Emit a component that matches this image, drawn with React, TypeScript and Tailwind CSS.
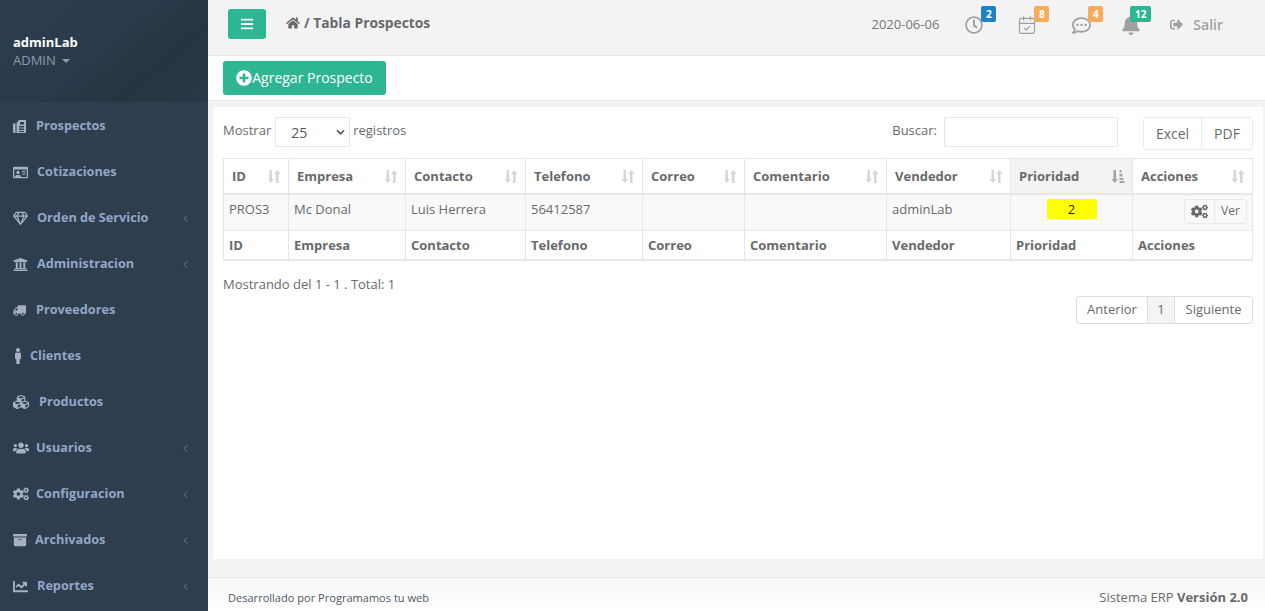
import type { ReactNode } from "react";
import { CalendarCheck, ChevronLeft } from "lucide-react";
import {
  FaArchive,
  FaBars,
  FaBell,
  FaChartLine,
  FaCogs,
  FaCubes,
  FaHome,
  FaMale,
  FaPlusCircle,
  FaRegClock,
  FaRegCommentDots,
  FaRegGem,
  FaRegIdCard,
  FaSignOutAlt,
  FaTruck,
  FaUniversity,
  FaUsers,
} from "react-icons/fa";

const PagesIcon = () => (
  <svg viewBox="0 0 13 13" className="h-[13px] w-[13px] fill-current">
    <path d="M0 3.500h2.500V13H1a1 1 0 0 1-1-1z" />
    <path
      fillRule="evenodd"
      d="M6 0h6a1 1 0 0 1 1 1v11a1 1 0 0 1-1 1H3.500V3zM6 6v1.500h5V6zM6 8.500V10h5V8.500zM6 11v1h5v-1zM7 2v2.500h4V2z"
    />
  </svg>
);

const menu = [
  { label: "Prospectos", icon: <PagesIcon />, slot: "w-[23px]" },
  { label: "Cotizaciones", icon: <FaRegIdCard className="text-[15px]" />, slot: "w-[24px]" },
  { label: "Orden de Servicio", icon: <FaRegGem className="text-[15px]" />, slot: "w-[24px]", arrow: true },
  { label: "Administracion", icon: <FaUniversity className="text-[15px]" />, slot: "w-[24px]", arrow: true },
  { label: "Proveedores", icon: <FaTruck className="-scale-x-100 text-[13px]" />, slot: "w-[23px]" },
  { label: "Clientes", icon: <FaMale className="-ml-[3px] text-[16px]" />, slot: "w-[17px]" },
  { label: "Productos", icon: <FaCubes className="text-[16px]" />, slot: "w-[26px]" },
  { label: "Usuarios", icon: <FaUsers className="text-[16px]" />, slot: "w-[23px]", arrow: true },
  { label: "Configuracion", icon: <FaCogs className="text-[16px]" />, slot: "w-[23px]", arrow: true },
  { label: "Archivados", icon: <FaArchive className="text-[14px]" />, slot: "w-[22px]", arrow: true },
  { label: "Reportes", icon: <FaChartLine className="text-[15px]" />, slot: "w-[24px]", arrow: true },
];

const columns = [
  { label: "ID", width: "w-[65px]" },
  { label: "Empresa", width: "w-[117px]" },
  { label: "Contacto", width: "w-[120px]" },
  { label: "Telefono", width: "w-[117px]" },
  { label: "Correo", width: "w-[102px]" },
  { label: "Comentario", width: "w-[142px]" },
  { label: "Vendedor", width: "w-[124px]" },
  { label: "Prioridad", width: "w-[122px]" },
  { label: "Acciones", width: "w-[120px]" },
];

const SortIcon = () => (
  <svg viewBox="0 0 14 15" className="h-[15px] w-[14px] fill-[#d6d6d6]">
    <path d="M2.500 1h2.500v9h2l-3.250 4L.5 10h2z" />
    <path d="M11.500 14H9V5H7l3.250-4L13.500 5h-2z" />
  </svg>
);

const SortActive = () => (
  <svg viewBox="0 0 14 15" className="h-[15px] w-[14px] fill-[#a2a2a2]">
    <path d="M2.500 1h2.500v9h2l-3.250 4L.5 10h2z" />
    <path d="M8.500 1h2v2.500h-2zM8.500 5h3v2.500h-3zM8.500 9h4v2h-4zM8.500 12h5v2h-5z" />
  </svg>
);

const TopIcon = ({ icon, count, color, wide }: { icon: ReactNode; count: string; color: string; wide?: boolean }) => (
  <div className="relative flex h-[20px] w-[20px] items-center justify-center text-[#a0a0a0]">
    {icon}
    <span
      className={`absolute -top-[9px] flex h-[16px] items-center justify-center rounded-[2px] text-[10px] font-bold text-white ${color} ${
        wide ? "left-[9px] w-[21px]" : "left-[17px] w-[15px]"
      }`}
    >
      {count}
    </span>
  </div>
);

export default function App() {
  return (
    <div className="flex h-[611px] w-full overflow-hidden bg-[#f3f3f4] font-['Open_Sans',sans-serif] text-[13px] text-[#676a6c]">
      {/* Sidebar */}
      <aside className="flex w-[208px] shrink-0 flex-col bg-[#2f3e4f]">
        <div className="flex h-[102px] flex-col bg-[linear-gradient(140deg,#2c3d4d_0%,#2a3a4a_45%,#263542_72%,#2a3947_100%)] pl-[13px] pt-[33px]">
          <span className="text-[13px] font-bold leading-[18px] text-white">adminLab</span>
          <span className="flex items-center gap-[6px] text-[13px] leading-[18px] text-[#8a9bab]">
            ADMIN
            <span className="mt-[2px] border-x-[4px] border-t-[4px] border-x-transparent border-t-[#8a9bab]" />
          </span>
        </div>
        <nav className="flex flex-col pt-[1px]">
          {menu.map((item) => (
            <div key={item.label} className="flex h-[46px] items-center pl-[13px] pr-[17px] text-[12.7px] font-bold text-[#92a7c6]">
              <span className={`flex shrink-0 items-center text-[#a7b1c2] ${item.slot}`}>{item.icon}</span>
              <span>{item.label}</span>
              {item.arrow && <ChevronLeft size={11} strokeWidth={1.5} className="ml-auto text-[#8a9bab]" />}
            </div>
          ))}
        </nav>
      </aside>

      <main className="flex min-w-0 flex-1 flex-col">
        {/* Top bar */}
        <header className="flex h-[56px] shrink-0 items-start border-b border-[#e7e7e7] pl-[20px] pr-[42px]">
          <button className="mt-[9px] flex h-[30px] w-[38px] items-center justify-center rounded-[3px] bg-[#2eb592] text-[14px] text-white">
            <FaBars />
          </button>
          <div className="ml-[20px] mt-[13px] flex items-center gap-[4px] text-[13.8px] font-bold leading-[20px] text-[#676a6c]">
            <FaHome className="text-[14px]" />
            <span>/ Tabla Prospectos</span>
          </div>
          <div className="ml-auto mt-[15px] flex items-center">
            <span className="text-[13px] text-[#777]">2020-06-06</span>
            <div className="ml-[25px] flex items-center">
              <TopIcon icon={<FaRegClock className="text-[18px]" />} count="2" color="bg-[#1c84c6]" />
              <div className="w-[33px]" />
              <TopIcon icon={<CalendarCheck size={20} strokeWidth={1.4} />} count="8" color="bg-[#f8ac59]" />
              <div className="w-[34px]" />
              <TopIcon icon={<FaRegCommentDots className="text-[19px]" />} count="4" color="bg-[#f8ac59]" />
              <div className="w-[30px]" />
              <TopIcon icon={<FaBell className="text-[20px]" />} count="12" color="bg-[#2eb592]" wide />
            </div>
            <div className="-mt-[2px] ml-[29px] flex items-center gap-[10px] text-[14px] font-semibold text-[#a0a0a0]">
              <FaSignOutAlt className="text-[13px]" />
              <span>Salir</span>
            </div>
          </div>
        </header>

        {/* Action bar */}
        <div className="flex h-[45px] shrink-0 items-start border-b border-[#e7e7e7] bg-white pl-[15px] pt-[5px]">
          <button className="flex h-[34px] w-[163px] items-center justify-center rounded-[3px] bg-[#2eb592] pb-[2px] text-[14px] font-medium text-white">
            <FaPlusCircle className="mt-[2px] text-[16px]" />
            <span>Agregar Prospecto</span>
          </button>
        </div>

        {/* Panel */}
        <section className="ml-[5px] mr-[2px] mt-[6px] flex h-[452px] shrink-0 flex-col bg-white px-[10px] pt-[10px]">
          <div className="flex items-start justify-between">
            <div className="flex items-center gap-[3px]">
              <span className="mb-[2px] mr-[1px]">Mostrar</span>
              <div className="flex h-[30px] w-[75px] items-center justify-between rounded-[1px] border border-[#e5e6e7] pl-[15px] pr-[4px] text-[14px] text-[#555]">
                <span>25</span>
                <svg viewBox="0 0 10 6" className="h-[6px] w-[9px] fill-none stroke-[#555] stroke-[1.8]">
                  <path d="M1 1l4 4 4-4" />
                </svg>
              </div>
              <span className="mb-[2px]">registros</span>
            </div>
            <div className="flex items-start">
              <span className="mt-[4px]">Buscar:</span>
              <div className="ml-[7px] h-[30px] w-[174px] rounded-[1px] border border-[#e5e6e7]" />
              <div className="ml-[25px] flex h-[33px] overflow-hidden rounded-[3px] border border-[#e7eaec] text-[14px]">
                <span className="flex w-[58px] items-center justify-center border-r border-[#e7eaec]">Excel</span>
                <span className="flex w-[50px] items-center justify-center">PDF</span>
              </div>
            </div>
          </div>

          <table className="mt-[8px] w-[1029px] table-fixed border-collapse">
            <thead>
              <tr className="h-[35px] border-b-2 border-[#e7e7e7]">
                {columns.map((col) => (
                  <th
                    key={col.label}
                    className={`border border-b-0 border-[#e7e7e7] pl-[8px] pr-[7px] pt-[2px] text-left font-bold ${col.width} ${
                      col.label === "Prioridad" ? "bg-[#f3f3f4]" : ""
                    }`}
                  >
                    <div className="flex items-center justify-between">
                      <span>{col.label}</span>
                      {col.label === "Prioridad" ? <SortActive /> : <SortIcon />}
                    </div>
                  </th>
                ))}
              </tr>
            </thead>
            <tbody>
              <tr className="h-[37px] bg-[#f9f9f9]">
                <td className="border border-[#e7e7e7] px-[5px] pb-[6px]">PROS3</td>
                <td className="border border-[#e7e7e7] px-[5px] pb-[6px]">Mc Donal</td>
                <td className="border border-[#e7e7e7] px-[5px] pb-[6px]">Luis Herrera</td>
                <td className="border border-[#e7e7e7] px-[5px] pb-[6px]">56412587</td>
                <td className="border border-[#e7e7e7] px-[5px] pb-[6px]" />
                <td className="border border-[#e7e7e7] px-[5px] pb-[6px]" />
                <td className="border border-[#e7e7e7] px-[5px] pb-[6px]">adminLab</td>
                <td className="border border-[#e7e7e7] px-[5px] pb-[6px]">
                  <div className="mx-auto flex h-[20px] w-[50px] items-center justify-center bg-[#ffff00] text-[#222]">2</div>
                </td>
                <td className="border border-[#e7e7e7] pb-[2px] pr-[5px]">
                  <div className="ml-auto flex h-[25px] w-[63px] overflow-hidden rounded-[3px] border border-[#e7eaec] text-[12px]">
                    <span className="flex w-[30px] items-center justify-center border-r border-[#e7eaec] text-[17px] text-[#676a6c]">
                      <FaCogs />
                    </span>
                    <span className="flex flex-1 items-center justify-center">Ver</span>
                  </div>
                </td>
              </tr>
            </tbody>
            <tfoot>
              <tr className="h-[29px] border-b-2 border-[#e7e7e7]">
                {columns.map((col) => (
                  <td key={col.label} className="border border-b-0 border-[#e7e7e7] px-[5px] pt-[2px] font-bold">
                    {col.label}
                  </td>
                ))}
              </tr>
            </tfoot>
          </table>

          <div className="mt-[14px] leading-[18px]">Mostrando del 1 - 1 . Total: 1</div>
          <div className="mt-[3px] flex justify-end">
            <div className="flex h-[28px] overflow-hidden rounded-[3px] border border-[#ddd] text-[13px]">
              <span className="flex w-[70px] items-center justify-center">Anterior</span>
              <span className="flex w-[28px] items-center justify-center border-x border-[#ddd] bg-[#f4f4f4]">1</span>
              <span className="flex w-[77px] items-center justify-center">Siguiente</span>
            </div>
          </div>
        </section>

        {/* Footer */}
        <footer className="mt-auto flex h-[34px] shrink-0 items-center justify-between border-t border-[#e7e7e7] bg-[linear-gradient(to_bottom,#f7f7f7,#ffffff)] pl-[20px] pr-[17px] pt-[6px]">
          <span className="mt-[2px] text-[11.05px] text-[#4c5a66]">Desarrollado por Programamos tu web</span>
          <span className="text-[13px]">
            Sistema ERP <strong className="font-bold">Versión 2.0</strong>
          </span>
        </footer>
      </main>
    </div>
  );
}
